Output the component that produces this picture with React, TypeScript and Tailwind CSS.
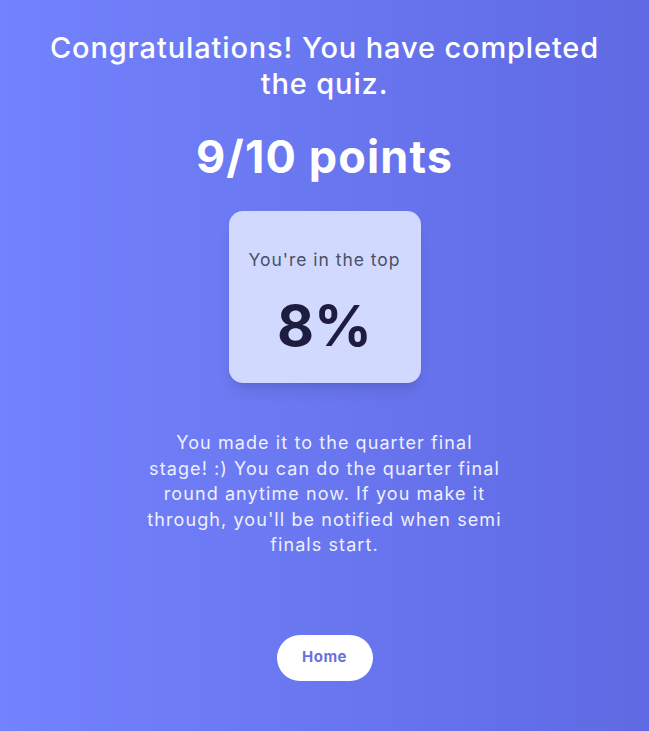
import React from 'react'

export default function App() {
  return (
    <div
      className="min-h-[731px] w-full bg-gradient-to-r from-[#7383fd] to-[#5f6ae3] flex flex-col items-center px-6 pt-[30px] text-center"
      style={{ fontFamily: 'Inter, "Noto Sans", sans-serif' }}
    >
      <h1 className="text-[29px] leading-[36px] font-medium text-white max-w-[580px] tracking-[0.03em]">
        Congratulations! You have completed the quiz.
      </h1>
      <div className="mt-[29px] text-[45px] leading-[52px] font-bold text-white tracking-[0.025em]">9/10 points</div>

      <div className="mt-[28px] w-[192px] h-[172px] rounded-[14px] bg-[#d2d9fe] shadow-lg flex flex-col items-center pt-[36px]">
        <div className="text-[17.5px] leading-[26px] text-[#4b5069] tracking-[0.055em]">You're in the top</div>
        <div className="mt-[22px] text-[57px] leading-[62px] font-bold text-[#1e1c3f]">8%</div>
      </div>

      <p className="mt-[47px] w-[360px] text-[18px] leading-[25.5px] text-[#eef0ff] tracking-[0.06em]">
        You made it to the quarter final stage! :) You can do the quarter final round anytime now. If you make it
        through, you'll be notified when semi finals start.
      </p>

      <button className="mt-[77px] w-[96px] h-[46px] rounded-full bg-white text-[15px] font-bold font-[Inter] text-[#6a72d8] tracking-[0.03em]">
        Home
      </button>
    </div>
  )
}
